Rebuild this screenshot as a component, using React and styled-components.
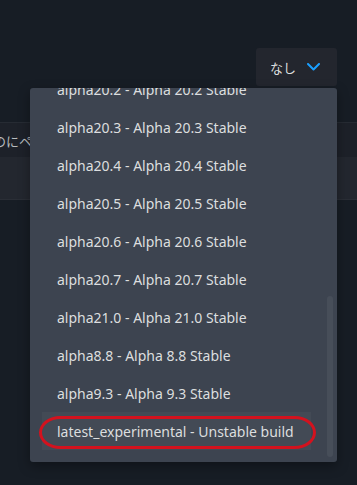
import React, { useLayoutEffect, useRef } from "react";
import styled, { createGlobalStyle } from "styled-components";

const GlobalStyle = createGlobalStyle`
  html, body {
    margin: 0;
    padding: 0;
    background: #171d25;
    overflow: hidden;
  }
  body {
    font-family: "Noto Sans", "Noto Sans CJK JP", Arial, sans-serif;
    color: #dcdedf;
  }
`;

const BRANCHES = [
  { id: "alpha17.4", label: "Alpha 17.4 Stable" },
  { id: "alpha18.4", label: "Alpha 18.4 Stable" },
  { id: "alpha19.6", label: "Alpha 19.6 Stable" },
  { id: "alpha20.0", label: "Alpha 20.0 Stable" },
  { id: "alpha20.1", label: "Alpha 20.1 Stable" },
  { id: "alpha20.2", label: "Alpha 20.2 Stable" },
  { id: "alpha20.3", label: "Alpha 20.3 Stable" },
  { id: "alpha20.4", label: "Alpha 20.4 Stable" },
  { id: "alpha20.5", label: "Alpha 20.5 Stable" },
  { id: "alpha20.6", label: "Alpha 20.6 Stable" },
  { id: "alpha20.7", label: "Alpha 20.7 Stable" },
  { id: "alpha21.0", label: "Alpha 21.0 Stable" },
  { id: "alpha8.8", label: "Alpha 8.8 Stable" },
  { id: "alpha9.3", label: "Alpha 9.3 Stable" },
  { id: "latest_experimental", label: "Unstable build", marked: true },
];

const Page = styled.div`
  height: 485px;
  padding-top: 48px;
  box-sizing: border-box;
`;

const Toolbar = styled.div`
  display: flex;
  justify-content: flex-end;
  padding-right: 20px;
  position: relative;
  z-index: 2;
`;

const SelectWrap = styled.div`
  position: relative;
`;

const SelectButton = styled.button`
  display: flex;
  align-items: center;
  gap: 11px;
  width: 81px;
  height: 38px;
  padding: 0 0 0 14px;
  box-sizing: border-box;
  border: none;
  border-radius: 3px;
  background: #23262e;
  color: #dcdedf;
  font-family: "Noto Sans CJK JP", sans-serif;
  font-size: 13px;
  cursor: pointer;
`;

const Menu = styled.div`
  position: absolute;
  top: calc(100% + 2px);
  right: 0;
  width: 307px;
  height: 374px;
  background: #3d4450;
  border-radius: 3px;
  overflow: hidden;
  box-shadow: 0 4px 12px rgba(0, 0, 0, 0.35);
`;

const List = styled.div`
  height: 100%;
  overflow: hidden;
  box-sizing: border-box;
  padding: 0 26px 12px 12px;
`;

const Item = styled.div`
  position: relative;
  display: flex;
  align-items: center;
  height: 38px;
  padding-left: 15px;
  font-size: 14px;
  white-space: nowrap;
  background: ${(p) => (p.$marked ? "#434a55" : "transparent")};
`;

const Ring = styled.span`
  position: absolute;
  left: -3px;
  right: -5px;
  top: 4px;
  bottom: 1px;
  border: 3px solid #d3121e;
  border-radius: 22px / 17px;
  pointer-events: none;
`;

const Thumb = styled.div`
  position: absolute;
  right: 4px;
  top: 208px;
  width: 6px;
  height: 161px;
  border-radius: 3px;
  background: #474e59;
`;

const Panel = styled.div`
  margin-top: 36px;
  border-top: 1px solid #262b33;
  border-bottom: 1px solid #2a2e36;
`;

const PanelHead = styled.div`
  height: 34px;
  display: flex;
  align-items: center;
  background: #1d2129;
  font-family: "Noto Sans CJK JP", sans-serif;
  font-size: 13px;
  color: #b8bcbf;
  text-indent: -7px;
  white-space: nowrap;
  overflow: hidden;
`;

const PanelBody = styled.div`
  height: 42px;
  background: #23272f;
`;

function Chevron() {
  return (
    <svg width="13" height="8" viewBox="0 0 13 8" fill="none">
      <path d="M1 1l5.5 5.5L12 1" stroke="#1a9fff" strokeWidth="2" strokeLinecap="round" strokeLinejoin="round" />
    </svg>
  );
}

export default function App() {
  const listRef = useRef(null);

  useLayoutEffect(() => {
    const el = listRef.current;
    if (el) el.scrollTop = el.scrollHeight;
  }, []);

  return (
    <Page>
      <GlobalStyle />
      <Toolbar>
        <SelectWrap>
          <SelectButton>
            なし
            <Chevron />
          </SelectButton>
          <Menu>
            <List ref={listRef}>
              {BRANCHES.map((b) => (
                <Item key={b.id} $marked={b.marked}>
                  {b.id} - {b.label}
                  {b.marked && <Ring />}
                </Item>
              ))}
            </List>
            <Thumb />
          </Menu>
        </SelectWrap>
      </Toolbar>
      <Panel>
        <PanelHead>のにページを表示します</PanelHead>
        <PanelBody />
      </Panel>
    </Page>
  );
}
